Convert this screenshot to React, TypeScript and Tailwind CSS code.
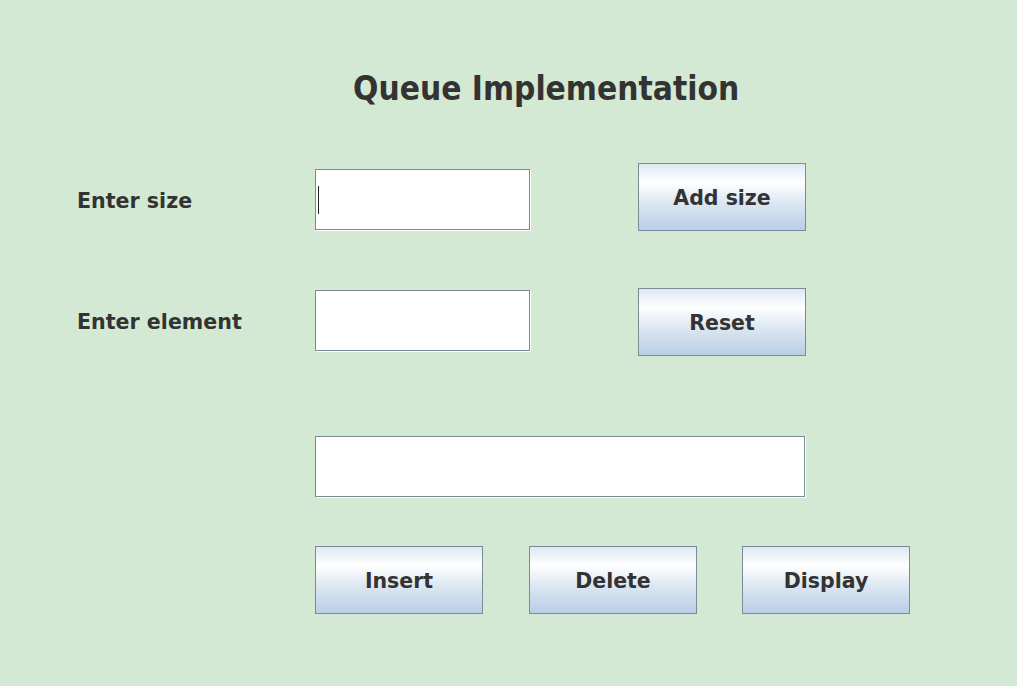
const font = { fontFamily: '"DejaVu Sans", "Liberation Sans", sans-serif' };

function Field({ width, caret }: { width: string; caret?: boolean }) {
  return (
    <div
      className={`${width} h-[61px] bg-white border border-[#7a8a99] shadow-[1px_1px_0_#ffffff] flex items-center pl-[2px]`}
    >
      {caret && <span className="block w-px h-[28px] bg-[#222]" />}
    </div>
  );
}

function JButton({ label, extra = "" }: { label: string; extra?: string }) {
  return (
    <button
      className={`w-[168px] h-[68px] border border-[#7a8a99] bg-[linear-gradient(to_bottom,#dde8f3_0%,#ffffff_28%,#dbe6f1_60%,#b9cfe5_100%)] text-[20.5px] font-bold text-[#333333] flex items-center justify-center pt-[2px] ${extra}`}
      style={font}
    >
      {label}
    </button>
  );
}

export default function App() {
  return (
    <div className="w-[1017px] h-[686px] bg-[#d3e9d3] relative overflow-hidden" style={font}>
      <div className="pt-[70px] pl-[353px]">
        <h1
          className="text-[33.2px] font-bold text-[#333333] leading-[38px]"
          style={{ fontFamily: '"DejaVu Sans Condensed", "DejaVu Sans", sans-serif' }}
        >
          Queue Implementation
        </h1>
      </div>

      <div className="mt-[55px] flex items-start">
        <div className="w-[315px] pl-[77px] pt-[26px] text-[20.6px] font-bold text-[#333333] leading-[24px]">
          Enter size
        </div>
        <div className="pt-[6px]">
          <Field width="w-[215px]" caret />
        </div>
        <div className="ml-[108px]">
          <JButton label="Add size" />
        </div>
      </div>

      <div className="mt-[57px] flex items-start">
        <div className="w-[315px] pl-[77px] pt-[22px] text-[20.6px] font-bold text-[#333333] leading-[24px]">
          Enter element
        </div>
        <div className="pt-[2px]">
          <Field width="w-[215px]" />
        </div>
        <div className="ml-[108px]">
          <JButton label="Reset" />
        </div>
      </div>

      <div className="mt-[80px] pl-[315px]">
        <Field width="w-[490px]" />
      </div>

      <div className="mt-[49px] pl-[315px] flex">
        <JButton label="Insert" />
        <JButton label="Delete" extra="ml-[46px]" />
        <JButton label="Display" extra="ml-[45px]" />
      </div>
    </div>
  );
}
